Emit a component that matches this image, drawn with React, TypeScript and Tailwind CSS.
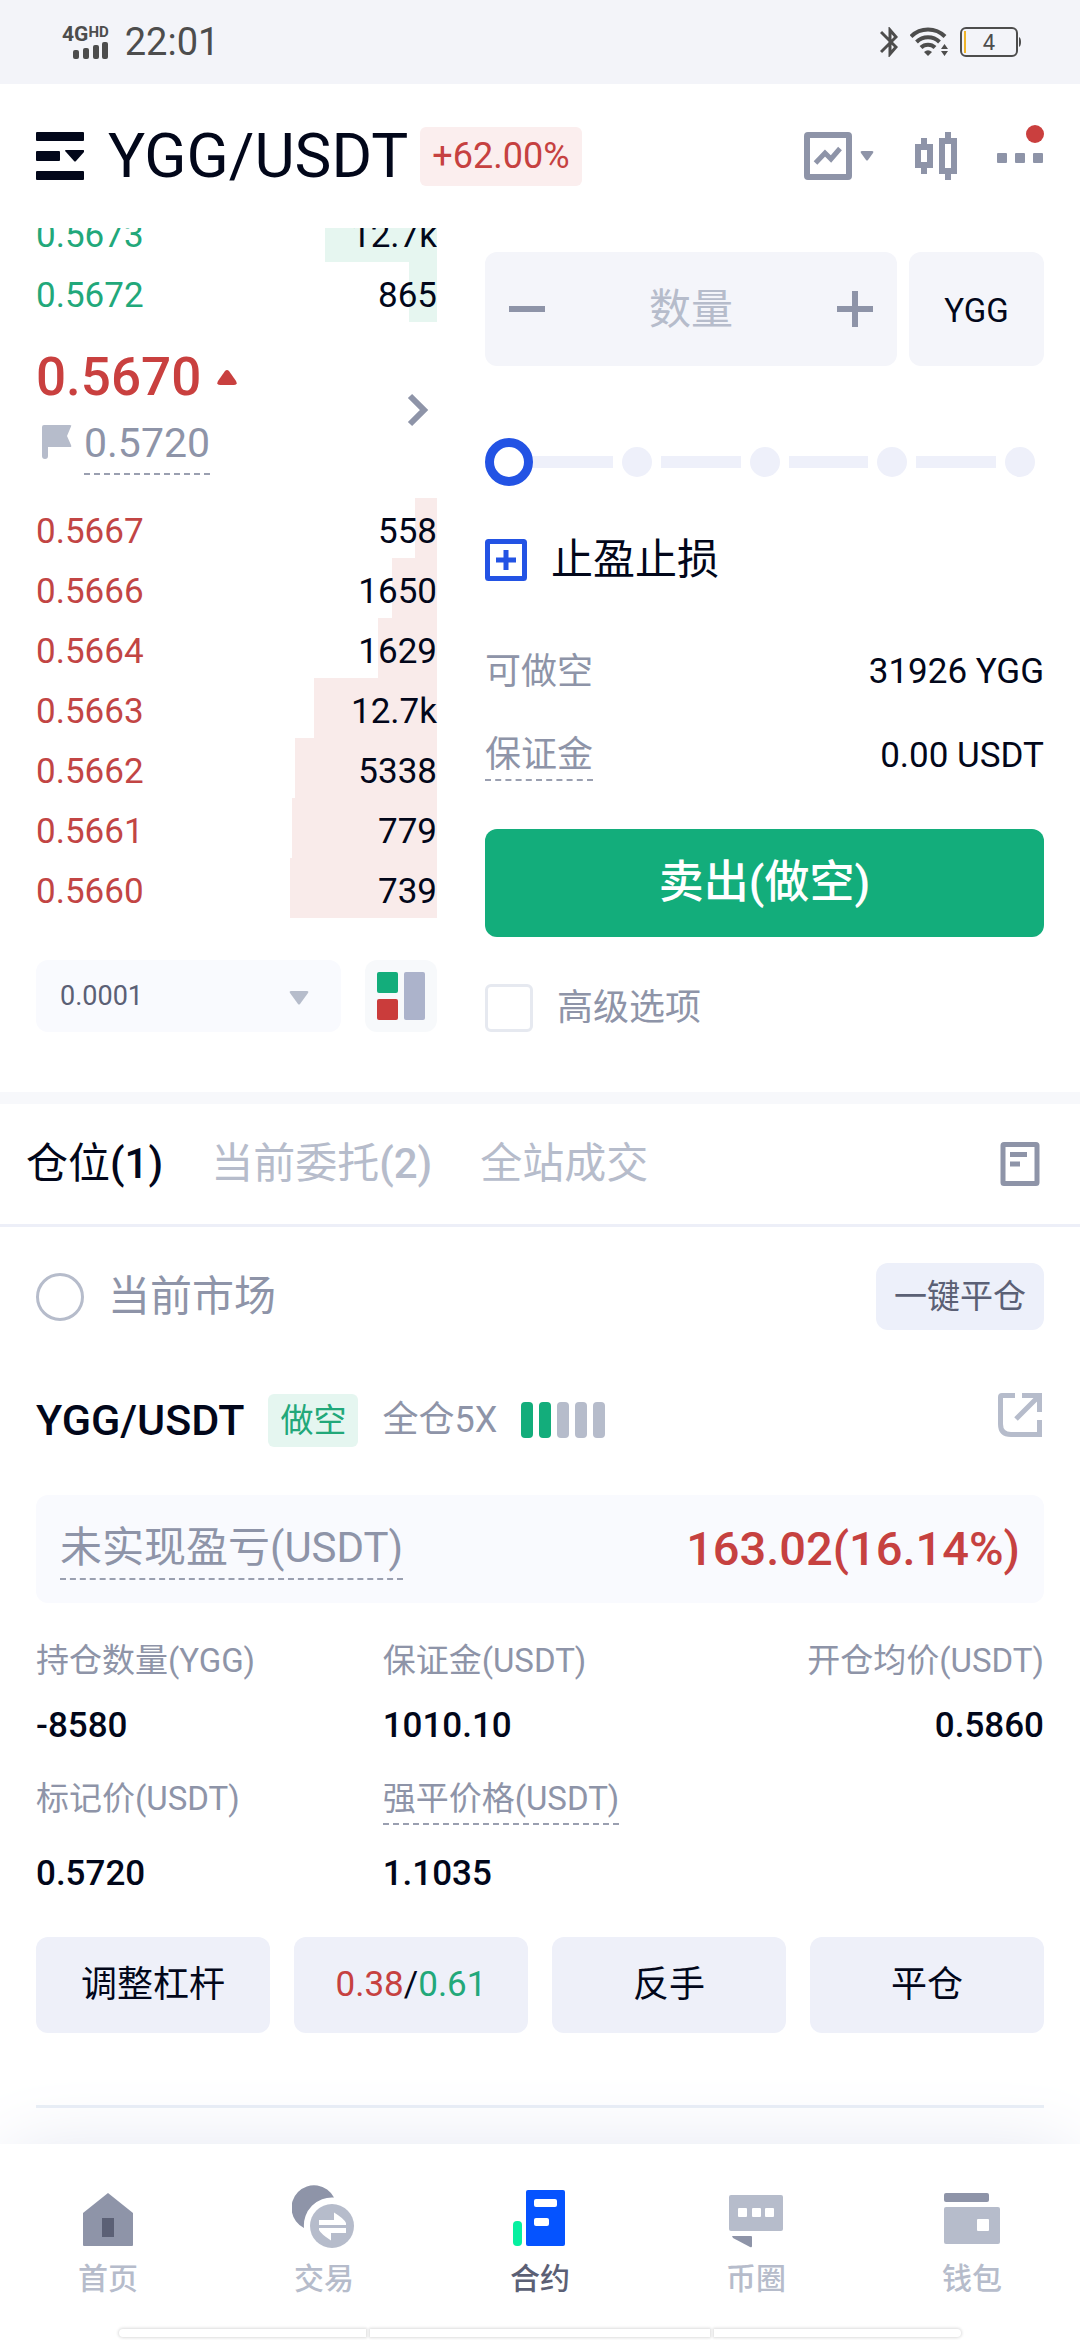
import React, { useState } from 'react';

const asks = [
  { price: '0.5673', size: '12.7k', depth: 112 },
  { price: '0.5672', size: '865', depth: 28 },
];

const bids = [
  { price: '0.5667', size: '558', depth: 22 },
  { price: '0.5666', size: '1650', depth: 45 },
  { price: '0.5664', size: '1629', depth: 59 },
  { price: '0.5663', size: '12.7k', depth: 123 },
  { price: '0.5662', size: '5338', depth: 142 },
  { price: '0.5661', size: '779', depth: 145 },
  { price: '0.5660', size: '739', depth: 147 },
];

// depth that fills a whole row
const MAX_DEPTH = 401;

function StatusBar() {
  return (
    <div className="flex h-[84px] items-center justify-between bg-[#f3f4f9] pr-[58px] pl-[62px] text-[#4d4d4d]">
      <div className="flex items-center gap-4">
        <div className="flex flex-col items-end">
          <div className="flex items-start font-bold">
            <span className="text-[21px] leading-4">4G</span>
            <span className="text-[15px] leading-3">HD</span>
          </div>
          <svg width="36" height="17" viewBox="0 0 36 17" fill="currentColor">
            <rect x="0" y="8" width="6" height="9" rx="2" />
            <rect x="10" y="6" width="6" height="11" rx="2" />
            <rect x="20" y="3" width="6" height="14" rx="2" />
            <rect x="29" y="0" width="6" height="17" rx="2" />
          </svg>
        </div>
        <span className="text-[38px] leading-10">22:01</span>
      </div>
      <div className="flex items-center gap-3">
        <svg width="18" height="30" viewBox="0 0 18 30" fill="none" stroke="currentColor" strokeWidth="3">
          <path d="M1 5l15 15-6 7V3l6 7L1 25" />
        </svg>
        <svg width="38" height="30" viewBox="0 0 38 30" fill="none" stroke="currentColor" strokeWidth="4">
          <path d="M1 9.500a24 24 0 0 1 34 0" />
          <path d="M6.500 15a16.500 16.500 0 0 1 23 0" />
          <path d="M11 20.500a10 10 0 0 1 14 0" />
          <path d="M14 25q4-3.500 8 0l-4 4z" fill="currentColor" stroke="none" />
          <path d="M31 22l3.500-5 3.500 5zM31 24h7l-3.500 5z" fill="currentColor" stroke="none" />
        </svg>
        <svg width="62" height="30" viewBox="0 0 62 30">
          <rect x="1" y="1" width="56" height="28" rx="5" fill="none" stroke="currentColor" strokeWidth="2" />
          <rect x="4" y="4" width="2" height="22" fill="#f0b429" />
          <path d="M59 10q2 1 2 5t-2 5z" fill="currentColor" />
          <text x="29" y="23" textAnchor="middle" fontSize="22" fill="currentColor">4</text>
        </svg>
      </div>
    </div>
  );
}

function Header() {
  return (
    <header className="flex h-36 items-center justify-between px-9">
      <div className="flex items-center">
        <button aria-label="菜单" className="text-[#02071a]">
          <svg width="48" height="48" viewBox="0 0 48 48" fill="currentColor">
            <rect width="48" height="9" rx="1" />
            <rect y="19" width="24" height="10" rx="1" />
            <path d="M30 18h17q2 0 1 2l-8 9q-1 1-2 0l-8-9q-2-2 0-2z" />
            <rect y="39" width="48" height="9" rx="1" />
          </svg>
        </button>
        <h1 className="ml-6 text-[62px] leading-[72px] text-[#02071a]">YGG/USDT</h1>
        <span className="ml-3 rounded-md bg-[#fbeeee] px-3 text-[36px] leading-[59px] text-[#c64140]">+62.00%</span>
      </div>
      <div className="flex items-center text-[#8e94a8]">
        <button aria-label="图表" className="flex items-center gap-2">
          <svg width="48" height="48" viewBox="0 0 48 48" fill="none" stroke="currentColor" strokeWidth="6">
            <rect x="3" y="3" width="42" height="42" rx="1" />
            <path d="M11.500 31L21 21l6 6 9-10.500" strokeWidth="5" />
          </svg>
          <svg width="14" height="10" viewBox="0 0 14 10" fill="currentColor">
            <path d="M2 0h10q2 0 1 2L8 9q-1 1-2 0L1 2q-1-2 1-2z" />
          </svg>
        </button>
        <button aria-label="K线" className="ml-[41px]">
          <svg width="42" height="48" viewBox="0 0 42 48" fill="none" stroke="currentColor" strokeWidth="6">
            <path d="M9 6v6M9 36v6M33 0v6M33 42v6" />
            <rect x="3" y="15" width="12" height="18" />
            <rect x="27" y="9" width="12" height="30" />
          </svg>
        </button>
        <button aria-label="更多" className="ml-10">
          <svg width="47" height="64" viewBox="0 0 47 64" fill="currentColor">
            <rect x="0" y="29" width="10" height="10" rx="1" />
            <rect x="18" y="29" width="10" height="10" rx="1" />
            <rect x="36" y="29" width="10" height="10" rx="1" />
            <circle cx="38" cy="10" r="9" fill="#ca3f3e" />
          </svg>
        </button>
      </div>
    </header>
  );
}

function BookRow({ row, side }: { row: any; side: 'ask' | 'bid' }) {
  return (
    <div className="relative flex h-[60px] shrink-0 items-center justify-between pt-2 text-[35px] leading-10">
      <div
        className={side === 'ask' ? 'absolute inset-y-0 right-0 bg-[#e6f6f0]' : 'absolute inset-y-0 right-0 bg-[#f9ebea]'}
        style={{ width: (row.depth / MAX_DEPTH) * 100 + '%' }}
      />
      <span className={side === 'ask' ? 'relative text-[#22a87a]' : 'relative text-[#c24544]'}>{row.price}</span>
      <span className="relative text-[#02071a]">{row.size}</span>
    </div>
  );
}

function OrderBook() {
  return (
    <div className="flex min-w-0 flex-[401] flex-col">
      <div className="flex h-[94px] flex-col justify-end overflow-hidden">
        {asks.map((row) => (
          <BookRow key={row.price} row={row} side="ask" />
        ))}
      </div>
      <div className="flex h-44 items-center justify-between pr-2">
        <div>
          <div className="flex items-center gap-4 text-[53px] leading-[64px] font-medium text-[#c9403f]">
            0.5670
            <svg width="20" height="15" viewBox="0 0 20 15" fill="currentColor">
              <path d="M8 1q2-2 4 0l7 10q2 4-2 4H3q-4 0-2-4z" />
            </svg>
          </div>
          <div className="mt-1 flex items-start gap-3 pl-[6px] text-[41px] leading-[60px] text-[#8e94a8]">
            <svg className="mt-3" width="30" height="34" viewBox="0 0 30 34" fill="#b6bccb">
              <path d="M2 0h26q2 0 1 1.500L25 11l4 9q1 2-1 2H6v9q0 3-3 3t-3-3V2q0-2 2-2z" />
            </svg>
            <span className="border-b-2 border-dashed border-[#9a9fb0]">0.5720</span>
          </div>
        </div>
        <button aria-label="详情" className="text-[#8e94a8]">
          <svg width="22" height="34" viewBox="0 0 22 34" fill="none" stroke="currentColor" strokeWidth="6">
            <path d="M3 3l14 14L3 31" />
          </svg>
        </button>
      </div>
      {bids.map((row) => (
        <BookRow key={row.price} row={row} side="bid" />
      ))}
      <div className="mt-[42px] flex gap-6">
        <div className="relative flex-1">
          <select aria-label="精度" className="h-[72px] w-full appearance-none rounded-xl bg-[#f9fafe] px-6 text-[27px] text-[#5b6075]">
            <option>0.0001</option>
          </select>
          <svg className="pointer-events-none absolute top-[31px] right-8" width="20" height="14" viewBox="0 0 20 14" fill="#b6bccb">
            <path d="M2 0h16q2 0 1 2l-8 11q-1 1-2 0L1 2q-1-2 1-2z" />
          </svg>
        </div>
        <button aria-label="盘口样式" className="grid size-[72px] place-items-center rounded-xl bg-[#f7f9fb]">
          <svg width="48" height="48" viewBox="0 0 48 48">
            <rect width="21" height="21" rx="2" fill="#13ad7b" />
            <rect y="27" width="21" height="21" rx="2" fill="#ca3c3b" />
            <rect x="27" width="21" height="48" rx="2" fill="#acb3cb" />
          </svg>
        </button>
      </div>
    </div>
  );
}

function AmountSlider() {
  const [percent, setPercent] = useState(0);
  return (
    <div className="relative mt-[72px] flex h-12 items-center">
      {[0, 25, 50, 75, 100].map((stop) => (
        <React.Fragment key={stop}>
          {stop > 0 && <div className="h-3 flex-1 bg-[#eef0fa]" />}
          {stop === percent ? (
            <div className="size-12 rounded-full border-[9px] border-[#2353e4]" />
          ) : (
            <div className="mx-[9px] size-[30px] rounded-full bg-[#eef0fa]" />
          )}
        </React.Fragment>
      ))}
      <input
        type="range"
        aria-label="数量比例"
        min={0}
        max={100}
        step={25}
        value={percent}
        onChange={(e) => setPercent(Number(e.target.value))}
        className="absolute inset-0 w-full opacity-0"
      />
    </div>
  );
}

function OrderForm() {
  return (
    <div className="flex min-w-0 flex-[559] flex-col pt-6">
      <div className="flex gap-3">
        <div className="flex h-[114px] min-w-0 flex-1 items-center justify-between rounded-xl bg-[#f4f5fa] px-6 text-[#8e94a8]">
          <button aria-label="减少">
            <svg width="36" height="36" viewBox="0 0 36 36" fill="currentColor">
              <rect y="15" width="36" height="6" />
            </svg>
          </button>
          <input
            aria-label="数量"
            placeholder="数量"
            className="h-16 w-40 min-w-0 text-center text-[42px] text-[#02071a] outline-none placeholder:text-[#b6bccb]"
          />
          <button aria-label="增加">
            <svg width="36" height="36" viewBox="0 0 36 36" fill="currentColor">
              <path d="M15 0h6v15h15v6H21v15h-6V21H0v-6h15z" />
            </svg>
          </button>
        </div>
        <button className="h-[114px] w-[135px] rounded-xl bg-[#f4f5fa] pt-1 text-[33px] text-[#02071a]">YGG</button>
      </div>

      <AmountSlider />

      <button className="mt-12 flex h-[52px] items-center gap-6 text-[42px] leading-[52px] text-[#02071a]">
        <svg width="42" height="42" viewBox="0 0 42 42" fill="none" stroke="#2353e4" strokeWidth="5">
          <rect x="2.500" y="2.500" width="37" height="37" rx="1" />
          <path d="M11 21h20M21 11v20" />
        </svg>
        止盈止损
      </button>

      <dl className="mt-11 text-[36px] leading-[48px]">
        <div className="flex h-[84px] items-center justify-between">
          <dt className="text-[#8e94a8]">可做空</dt>
          <dd className="text-[35px] text-[#02071a]">31926 YGG</dd>
        </div>
        <div className="flex h-[84px] items-center justify-between">
          <dt className="border-b-2 border-dashed border-[#9a9fb0] text-[#8e94a8]">保证金</dt>
          <dd className="text-[35px] text-[#02071a]">0.00 USDT</dd>
        </div>
      </dl>

      <button className="mt-[31px] h-[108px] rounded-xl bg-[#13ad7b] text-[45px] font-medium text-white">卖出(做空)</button>

      <label className="mt-[47px] flex h-12 items-center gap-6 text-[36px] text-[#8e94a8]">
        <input type="checkbox" className="size-12 appearance-none rounded-md border-3 border-[#e6e9f0] bg-white" />
        高级选项
      </label>
    </div>
  );
}

function Stat({ label, value, labelClass = 'mb-4', align = 'items-start' }: { label: string; value: string; labelClass?: string; align?: string }) {
  return (
    <div className={'flex flex-col ' + align}>
      <dt className={'text-[33px] leading-[48px] whitespace-nowrap text-[#8e94a8] ' + labelClass}>{label}</dt>
      <dd className="text-[35px] leading-[50px] font-medium text-[#02071a]">{value}</dd>
    </div>
  );
}

function Position() {
  return (
    <section className="px-9">
      <div className="mt-9 flex h-[67px] items-center justify-between">
        <label className="flex items-center gap-6 text-[42px] leading-[60px] text-[#8e94a8]">
          <input type="radio" name="market" className="size-12 appearance-none rounded-full border-3 border-[#b6bccb]" />
          当前市场
        </label>
        <button className="h-[67px] rounded-xl bg-[#edf0fa] px-[18px] text-[33px] text-[#5b6075]">一键平仓</button>
      </div>

      <div className="mt-[63px] flex h-[54px] items-center">
        <h2 className="text-[43px] font-medium text-[#02071a]">YGG/USDT</h2>
        <span className="ml-6 rounded-md bg-[#e5f6f0] px-3 text-[33px] leading-[53px] text-[#22a87a]">做空</span>
        <span className="ml-6 text-[36px] text-[#8e94a8]">全仓5X</span>
        <div className="ml-6 flex gap-[6px]">
          <i className="h-9 w-3 rounded-sm bg-[#13ad7b]" />
          <i className="h-9 w-3 rounded-sm bg-[#13ad7b]" />
          <i className="h-9 w-3 rounded-sm bg-[#b6bccb]" />
          <i className="h-9 w-3 rounded-sm bg-[#b6bccb]" />
          <i className="h-9 w-3 rounded-sm bg-[#b6bccb]" />
        </div>
        <button aria-label="分享" className="ml-auto self-start text-[#b6bccb]">
          <svg width="46" height="44" viewBox="0 0 46 44" fill="none" stroke="currentColor" strokeWidth="5">
            <path d="M17 2.500H4q-1.500 0-1.500 1.500v27q0 10.500 10.500 10.500h28.500V27" />
            <path d="M24 2.500h17.500V19M41.500 2.500L18 26" />
          </svg>
        </button>
      </div>

      <div className="mt-12 flex h-[108px] items-center justify-between rounded-xl bg-[#f9fafe] px-6">
        <span className="border-b-2 border-dashed border-[#9a9fb0] text-[42px] leading-[60px] text-[#8e94a8]">未实现盈亏(USDT)</span>
        <span className="text-[47px] leading-[60px] font-medium text-[#c64140]">163.02(16.14%)</span>
      </div>

      <dl className="mt-[34px] grid grid-cols-3 gap-x-8 gap-y-6">
        <Stat label="持仓数量(YGG)" value="-8580" />
        <Stat label="保证金(USDT)" value="1010.10" />
        <Stat label="开仓均价(USDT)" value="0.5860" align="items-end" />
        <Stat label="标记价(USDT)" value="0.5720" labelClass="mb-[26px]" />
        <Stat label="强平价格(USDT)" value="1.1035" labelClass="mb-6 border-b-2 border-dashed border-[#9a9fb0]" />
      </dl>

      <div className="mt-[38px] grid grid-cols-4 gap-6 text-[36px] text-[#02071a]">
        <button className="h-24 rounded-xl bg-[#eef0f9]">调整杠杆</button>
        <button className="h-24 rounded-xl bg-[#eef0f9] text-[35px]">
          <span className="text-[#c64140]">0.38</span>/<span className="text-[#22a87a]">0.61</span>
        </button>
        <button className="h-24 rounded-xl bg-[#eef0f9]">反手</button>
        <button className="h-24 rounded-xl bg-[#eef0f9]">平仓</button>
      </div>

      <div className="mt-[72px] mb-9 h-[3px] bg-[#e8eef6]" />
    </section>
  );
}

function NavItem({ label, active, children }: { label: string; active?: boolean; children: React.ReactNode }) {
  return (
    <a href="#" className="flex flex-1 flex-col items-center">
      <svg width="64" height="64" viewBox="0 0 64 64">{children}</svg>
      <span className={active ? 'mt-[10px] text-[30px] leading-10 font-medium text-[#5b6075]' : 'mt-[10px] text-[30px] leading-10 font-medium text-[#b6bccb]'}>
        {label}
      </span>
    </a>
  );
}

function BottomNav() {
  return (
    <nav className="relative bg-white pt-[41px] pb-[3px] shadow-[0_0_80px_-10px_#dfe2ee]">
      <div className="flex">
        <NavItem label="首页">
          <path d="M32 8l25 20v32q0 1-1 1H8q-1 0-1-1V28z" fill="#8e94a8" />
          <rect x="26" y="33" width="12" height="19" fill="#5b6075" />
        </NavItem>
        <NavItem label="交易">
          <path d="M42 12.500A22.500 22.500 0 1 0 12 43A28 28 0 0 1 42 12.500z" fill="#8e94a8" />
          <circle cx="40" cy="41" r="22" fill="#b6bccb" />
          <path d="M27 35h15v-7.500q10 6 12 10.500v2H27zM54 48H39v7.500Q29 49 27 45v-2h27z" fill="#fff" />
        </NavItem>
        <NavItem label="合约" active>
          <rect x="5" y="36" width="9" height="25" rx="4" fill="#06f0a0" />
          <rect x="18" y="5" width="39" height="56" rx="2" fill="#0553ff" />
          <rect x="26" y="14" width="23" height="8" rx="2" fill="#fff" />
          <rect x="26" y="33" width="15" height="8" rx="2" fill="#fff" />
        </NavItem>
        <NavItem label="币圈">
          <rect x="5" y="10" width="54" height="36" rx="2" fill="#b6bccb" />
          <rect x="14" y="23" width="9" height="9" rx="1" fill="#fff" />
          <rect x="28" y="23" width="9" height="9" rx="1" fill="#fff" />
          <rect x="41" y="23" width="9" height="9" rx="1" fill="#fff" />
          <path d="M8 51h19q1 0 1 1v9q0 2-2 1L9 53z" fill="#8e94a8" />
        </NavItem>
        <NavItem label="钱包">
          <rect x="4" y="8" width="45" height="9" rx="2" fill="#8e94a8" />
          <rect x="4" y="22" width="56" height="37" rx="2" fill="#b6bccb" />
          <rect x="37" y="34" width="12" height="12" rx="1" fill="#fff" />
        </NavItem>
      </div>
      <div className="mt-[30px] flex gap-1 px-[119px]">
        <div className="h-2 flex-[247] rounded-l-full bg-white shadow-[0_0_3px_1px_#dcdcdc]" />
        <div className="h-2 flex-[341] bg-white shadow-[0_0_3px_1px_#dcdcdc]" />
        <div className="h-2 flex-[247] rounded-r-full bg-white shadow-[0_0_3px_1px_#dcdcdc]" />
      </div>
    </nav>
  );
}

export default function App() {
  return (
    <div lang="zh-CN" className="flex min-h-screen flex-col overflow-hidden bg-white font-['Roboto','Noto_Sans_CJK_SC',sans-serif]">
      <StatusBar />
      <Header />
      <main className="flex-1">
        <section className="flex gap-12 px-9 pb-[60px]">
          <OrderBook />
          <OrderForm />
        </section>
        <div className="h-3 bg-[#f7f8fb]" />
        <div className="flex h-[123px] items-center justify-between border-b-3 border-[#edeff8] pr-10 pl-[26px]">
          <div className="flex gap-12 text-[42px] leading-[60px] text-[#b6bccb]">
            <button className="text-[#02071a]">仓位<span className="font-medium">(1)</span></button>
            <button>当前委托<span className="font-medium">(2)</span></button>
            <button>全站成交</button>
          </div>
          <button aria-label="订单记录" className="text-[#8e94a8]">
            <svg width="40" height="44" viewBox="0 0 40 44" fill="none" stroke="currentColor" strokeWidth="5">
              <rect x="3" y="2.500" width="34" height="39" rx="1" />
              <path d="M10 12.500h17M10 22h10" />
            </svg>
          </button>
        </div>
        <Position />
      </main>
      <BottomNav />
    </div>
  );
}
